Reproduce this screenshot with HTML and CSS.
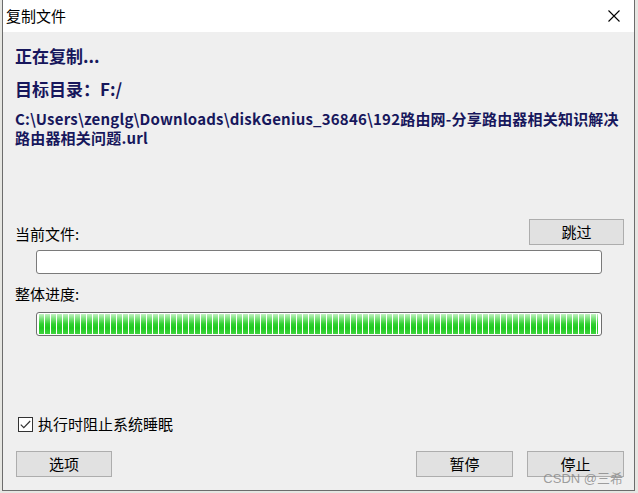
FILE: index.html
```html
<!DOCTYPE html>
<html lang="zh-CN">
<head>
<meta charset="utf-8">
<title>复制文件</title>
<link rel="stylesheet" href="styles.css">
</head>
<body>
<div class="window">
  <div class="titlebar">
    <span class="title">复制文件</span>
    <span class="close" aria-label="关闭">
      <svg width="12" height="12" viewBox="0 0 12 12"><path d="M0.5 0.5 L11.5 11.5 M11.5 0.5 L0.5 11.5" stroke="#000" stroke-width="1.1" fill="none"/></svg>
    </span>
  </div>
  <div class="content">
    <div class="heading h1">正在复制...</div>
    <div class="heading h2">目标目录：F:/</div>
    <div class="path">C:\Users\zenglg\Downloads\diskGenius_36846\192路由网-分享路由器相关知识解决<br>路由器相关问题.url</div>

    <div class="row current-row">
      <span class="label">当前文件:</span>
      <button class="btn skip">跳过</button>
    </div>
    <div class="field"></div>

    <div class="label total-label">整体进度:</div>
    <div class="progress"><div class="bar" style="width:100%"></div></div>

    <label class="check-row">
      <span class="checkbox">
        <svg width="11" height="9" viewBox="0 0 11 9"><path d="M0.8 4.6 L3.8 7.6 L10.2 1" stroke="#333" stroke-width="1.2" fill="none"/></svg>
      </span>
      <span class="check-label">执行时阻止系统睡眠</span>
    </label>

    <div class="row bottom-row">
      <button class="btn">选项</button>
      <div class="right-btns">
        <button class="btn">暂停</button>
        <button class="btn">停止</button>
      </div>
    </div>
  </div>
  <div class="watermark">CSDN @三希</div>
</div>
</body>
</html>
```

FILE: styles.css
```css
* { box-sizing: border-box; }
html, body {
  margin: 0;
  padding: 0;
}
body {
  width: 638px;
  height: 493px;
  overflow: hidden;
  background: #e6e6e2;
  font-family: "Noto Sans CJK SC", "Microsoft YaHei", sans-serif;
  font-size: 15px;
  color: #000;
}
.window {
  position: relative;
  margin-left: 2px;
  width: 633px;
  height: 491px;
  background: #f0f0f0;
  border-left: 1px solid #6c6c6c;
  border-right: 1px solid #6c6c6c;
  border-bottom: 1px solid #6c6c6c;
  display: flex;
  flex-direction: column;
}
.titlebar {
  height: 32px;
  background: #ffffff;
  display: flex;
  align-items: center;
  justify-content: space-between;
  padding-left: 3px;
  padding-right: 14px;
  flex: none;
}
.title {
  font-size: 15px;
  line-height: 20px;
  color: #000;
}
.close {
  display: flex;
  width: 12px;
  height: 12px;
}
.content {
  flex: 1;
  display: flex;
  flex-direction: column;
  padding: 0 10px 12px 12px;
  background: #efefef;
}
.heading {
  font-weight: bold;
  color: #17175c;
  font-size: 17px;
  line-height: 24px;
}
.h1 { margin-top: 12px; }
.h2 { margin-top: 9px; }
.path {
  margin-top: 8px;
  font-weight: bold;
  color: #17175c;
  font-size: 15px;
  line-height: 19px;
  letter-spacing: 0.2px;
  white-space: nowrap;
}
.row {
  display: flex;
  align-items: center;
  justify-content: space-between;
}
.current-row {
  margin-top: 72px;
  height: 26px;
}
.label {
  font-size: 15px;
  line-height: 20px;
}
.current-row .label { padding-top: 4px; }
.btn {
  font-family: inherit;
  font-size: 15px;
  line-height: 20px;
  width: 96px;
  height: 26px;
  background: #e1e1e1;
  border: 1px solid #adadad;
  color: #000;
  padding: 0;
  margin: 0;
}
.skip { width: 95px; margin-right: 0; }
.field {
  margin-top: 5px;
  margin-left: 21px;
  width: 566px;
  height: 24px;
  background: #fff;
  border: 1px solid #7a7a7a;
  border-radius: 3px;
}
.total-label {
  margin-top: 10px;
}
.progress {
  margin-top: 8px;
  margin-left: 21px;
  width: 566px;
  height: 24px;
  background: #fff;
  border: 1px solid #6e6e6e;
  border-radius: 3px;
  padding: 1px 3px 1px 2px;
}
.bar {
  height: 100%;
  background:
    repeating-linear-gradient(to right, transparent 0, transparent 5px, #ffffff 5px, #ffffff 6px),
    linear-gradient(to bottom, #c2f2c2 0%, #7ee37e 22%, #2fd02f 50%, #1fca1f 70%, #3fd43f 100%);
}
.check-row {
  margin-top: 78px;
  display: flex;
  align-items: center;
  height: 20px;
}
.checkbox {
  width: 15px;
  height: 15px;
  border: 1px solid #333;
  background: #fff;
  display: flex;
  align-items: center;
  justify-content: center;
  margin-left: 3px;
  margin-right: 5px;
}
.check-label {
  font-size: 15px;
  line-height: 20px;
}
.bottom-row {
  margin-top: auto;
  height: 26px;
  padding-left: 1px;
  margin-bottom: 1px;
}
.right-btns {
  display: flex;
  gap: 14px;
}
.right-btns .btn { width: 97px; }
.watermark {
  position: absolute;
  right: 11px;
  bottom: 4px;
  font-family: "Liberation Sans", "Noto Sans CJK SC", sans-serif;
  font-size: 13px;
  line-height: 15px;
  color: rgba(120, 120, 120, 0.7);
}
```
